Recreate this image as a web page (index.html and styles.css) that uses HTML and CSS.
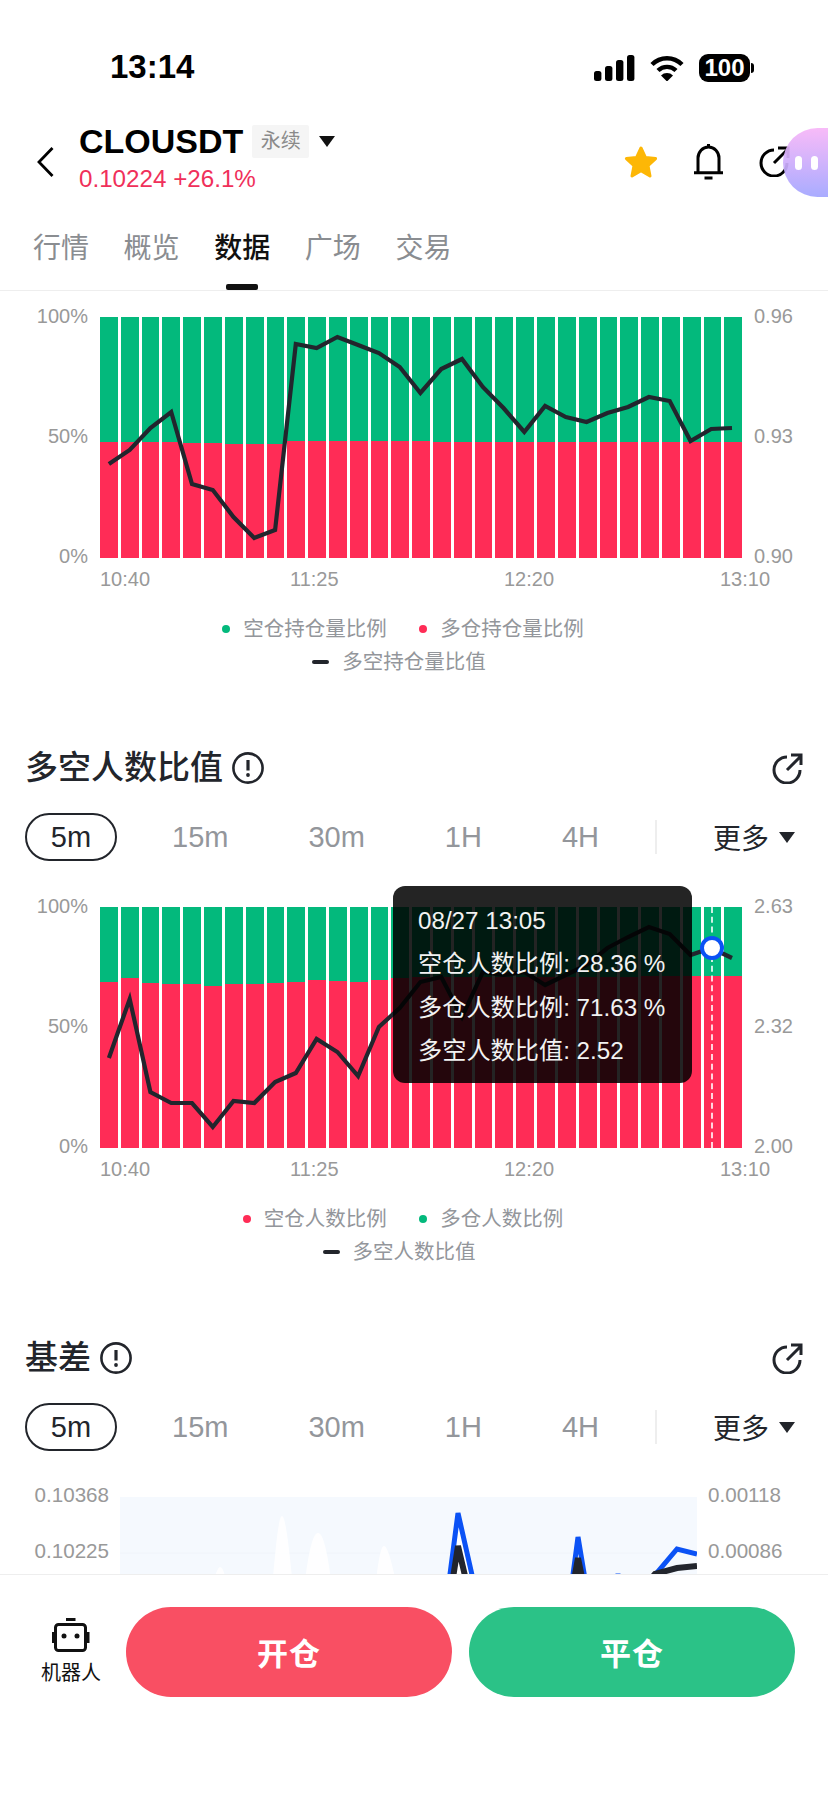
FILE: index.html
```html
<!DOCTYPE html>
<html lang="zh-CN">
<head>
    <meta charset="UTF-8">
    <meta name="viewport" content="width=device-width, initial-scale=1.0">
    <title>CLOUSDT</title>
    <link rel="stylesheet" href="styles.css">
</head>
<body>
<div class="page">
    <div class="status-bar">
        <span class="time">13:14</span>
        <div class="status-icons">
            <svg class="signal" width="41" height="26" viewBox="0 0 41 26">
                <rect x="0" y="16" width="7.4" height="10" rx="2.5"/>
                <rect x="11" y="11" width="7.4" height="15" rx="2.5"/>
                <rect x="22" y="5" width="7.4" height="21" rx="2.5"/>
                <rect x="33" y="0" width="7.4" height="26" rx="2.5"/>
            </svg>
            <svg class="wifi" width="34" height="26" viewBox="0 0 34 26">
                <path d="M2 9.5 A21 21 0 0 1 32 9.5" fill="none" stroke="#000" stroke-width="4.4"/>
                <path d="M8 15.5 A13 13 0 0 1 26 15.5" fill="none" stroke="#000" stroke-width="4.4"/>
                <path d="M11 20.4 A8.5 8.5 0 0 1 23 20.4 L17 26.5 Z"/>
            </svg>
            <span class="battery">100</span>
        </div>
    </div>

    <header class="header">
        <svg class="back" width="17" height="30" viewBox="0 0 17 30">
            <path d="M15.5 1 L2 15 L15.5 29" fill="none" stroke="#000" stroke-width="2.8"/>
        </svg>
        <div class="symbol">
            <div class="symbol-row">
                <span class="symbol-name">CLOUSDT</span>
                <span class="symbol-tag">永续</span>
                <span class="caret"></span>
            </div>
            <div class="symbol-price">0.10224 +26.1%</div>
        </div>
        <div class="header-icons">
            <svg width="36" height="34" viewBox="0 0 36 34">
                <polygon points="18,3 22.4,12.4 32.6,13.6 25,20.6 27,31 18,25.8 9,31 11,20.6 3.4,13.6 13.6,12.4" fill="#fdb706" stroke="#fdb706" stroke-width="3" stroke-linejoin="round"/>
            </svg>
            <svg width="30" height="36" viewBox="0 0 30 36">
                <path d="M14.5 0 V3 M4 28 V14 A10.5 11 0 0 1 25 14 V28 M0 28.7 H29 M10.5 34 H18.5" fill="none" stroke="#000" stroke-width="3"/>
            </svg>
            <svg width="31" height="31" viewBox="0 0 31 31">
                <path d="M15 4 A13 13 0 1 0 28 17 M15 17 L29 3 M19 2 H29 V12" fill="none" stroke="#000" stroke-width="3"/>
            </svg>
        </div>
        <div class="bubble"><i></i><i></i></div>
    </header>

    <nav class="tabs">
        <span class="tab">行情</span>
        <span class="tab">概览</span>
        <span class="tab active">数据</span>
        <span class="tab">广场</span>
        <span class="tab">交易</span>
    </nav>

    <main class="content">
        <section class="section">
            <div class="chart">
                <div class="y-axis left"><span>100%</span><span>50%</span><span>0%</span></div>
                <div class="plot" id="plot-position"></div>
                <div class="y-axis"><span>0.96</span><span>0.93</span><span>0.90</span></div>
                <div class="x-axis"><span>10:40</span><span>11:25</span><span>12:20</span><span>13:10</span></div>
            </div>
            <div class="legend">
                <div class="legend-row">
                    <span class="legend-item"><i class="dot green"></i>空仓持仓量比例</span>
                    <span class="legend-item"><i class="dot red"></i>多仓持仓量比例</span>
                </div>
                <div class="legend-row second">
                    <span class="legend-item"><i class="dash"></i>多空持仓量比值</span>
                </div>
            </div>
        </section>

        <section class="section">
            <div class="section-head">
                <h2>多空人数比值</h2>
                <svg class="info" width="32" height="32" viewBox="0 0 32 32">
                    <circle cx="16" cy="16" r="14.6" fill="none" stroke="#22252b" stroke-width="2.6"/>
                    <path d="M16 8 V18.5" stroke="#22252b" stroke-width="3.2"/>
                    <circle cx="16" cy="23" r="1.9" fill="#22252b"/>
                </svg>
                <svg class="share" width="31" height="31" viewBox="0 0 31 31">
                    <path d="M15 4 A13 13 0 1 0 28 17 M15 17 L29 3 M19 2 H29 V12" fill="none" stroke="#22252b" stroke-width="3"/>
                </svg>
            </div>
            <div class="ranges">
                <span class="range active">5m</span>
                <span class="range">15m</span>
                <span class="range">30m</span>
                <span class="range">1H</span>
                <span class="range">4H</span>
                <span class="range-sep"></span>
                <span class="range-more">更多<span class="caret big"></span></span>
            </div>
            <div class="chart">
                <div class="y-axis left"><span>100%</span><span>50%</span><span>0%</span></div>
                <div class="plot" id="plot-people">
                    <div class="cursor"></div>
                    <div class="cursor-dot"></div>
                    <div class="tooltip">
                        <div>08/27 13:05</div>
                        <div>空仓人数比例: 28.36 %</div>
                        <div>多仓人数比例: 71.63 %</div>
                        <div>多空人数比值: 2.52</div>
                    </div>
                </div>
                <div class="y-axis"><span>2.63</span><span>2.32</span><span>2.00</span></div>
                <div class="x-axis"><span>10:40</span><span>11:25</span><span>12:20</span><span>13:10</span></div>
            </div>
            <div class="legend">
                <div class="legend-row">
                    <span class="legend-item"><i class="dot red"></i>空仓人数比例</span>
                    <span class="legend-item"><i class="dot green"></i>多仓人数比例</span>
                </div>
                <div class="legend-row second">
                    <span class="legend-item"><i class="dash"></i>多空人数比值</span>
                </div>
            </div>
        </section>

        <section class="section">
            <div class="section-head">
                <h2>基差</h2>
                <svg class="info" width="32" height="32" viewBox="0 0 32 32">
                    <circle cx="16" cy="16" r="14.6" fill="none" stroke="#22252b" stroke-width="2.6"/>
                    <path d="M16 8 V18.5" stroke="#22252b" stroke-width="3.2"/>
                    <circle cx="16" cy="23" r="1.9" fill="#22252b"/>
                </svg>
                <svg class="share" width="31" height="31" viewBox="0 0 31 31">
                    <path d="M15 4 A13 13 0 1 0 28 17 M15 17 L29 3 M19 2 H29 V12" fill="none" stroke="#22252b" stroke-width="3"/>
                </svg>
            </div>
            <div class="ranges">
                <span class="range active">5m</span>
                <span class="range">15m</span>
                <span class="range">30m</span>
                <span class="range">1H</span>
                <span class="range">4H</span>
                <span class="range-sep"></span>
                <span class="range-more">更多<span class="caret big"></span></span>
            </div>
            <div class="chart basis">
                <div class="y-axis left"><span>0.10368</span><span>0.10225</span></div>
                <svg class="basis-plot" width="577" height="120" viewBox="0 0 577 120">
                    <rect width="577" height="120" fill="#f5f9fe"/>
                    <path d="M0 56 H577" stroke="#f0f4fa" stroke-width="1"/>
                    <g fill="#fff" fill-opacity="0.85">
                        <path d="M91 90 C95 78 98 70 100 70 C103 70 105 78 108 90 Z"/>
                        <path d="M152 90 C155 60 158 19 162 19 C166 19 170 60 173 90 Z"/>
                        <path d="M184 90 C188 60 192 36 198 36 C204 36 208 60 212 90 Z"/>
                        <path d="M255 90 C258 70 260 49 264 49 C268 49 273 70 277 90 Z"/>
                    </g>
                    <path d="M327 100 L338 16 L357 100 Z M450 100 L458 40 L468 100 Z" fill="#fff"/>
                    <path d="M327 100 L338 16 L357 100 M450 100 L458 40 L468 100 M494 100 L498 77 L503 100 M520 100 L535 78 L557 52 L577 57" fill="none" stroke="#0b52f5" stroke-width="5"/>
                    <path d="M330 100 L338 49 L350 100 M451 100 L458 61 L466 100 M515 100 L535 77 L557 71 L577 69" fill="none" stroke="#22252d" stroke-width="6"/>
                </svg>
                <div class="y-axis"><span>0.00118</span><span>0.00086</span></div>
            </div>
        </section>
    </main>

    <footer class="bottom-bar">
        <div class="robot">
            <svg width="38" height="34" viewBox="0 0 38 34">
                <rect x="14" y="0" width="9.5" height="3" fill="#111"/>
                <rect x="3.5" y="6.5" width="30" height="26" rx="3" fill="none" stroke="#111" stroke-width="3"/>
                <rect x="0" y="14" width="2.5" height="11" fill="#111"/>
                <rect x="35" y="14" width="2.5" height="11" fill="#111"/>
                <circle cx="12" cy="18" r="2.5" fill="#111"/>
                <circle cx="25" cy="18" r="2.5" fill="#111"/>
            </svg>
            <span>机器人</span>
        </div>
        <button class="trade open">开仓</button>
        <button class="trade close">平仓</button>
    </footer>
</div>
<script src="chart.js"></script>
</body>
</html>
```

FILE: styles.css
```css
*{
    margin: 0;
    padding: 0;
    box-sizing: border-box;
}
body{
    width: 828px;
    height: 1801px;
    overflow: hidden;
    background-color: white;
    font-family: "Liberation Sans", "Noto Sans CJK SC", sans-serif;
    color: #22252b;
}
.page{
    position: relative;
    height: 1801px;
    display: flex;
    flex-direction: column;
}

/* status bar */
.status-bar{
    height: 121px;
    flex: none;
    display: flex;
    align-items: flex-start;
    padding: 47px 78px 0 110px;
}
.time{
    font-size: 33px;
    line-height: 40px;
    font-weight: bold;
    color: black;
}
.status-icons{
    margin-left: auto;
    margin-top: 7px;
    display: flex;
    align-items: center;
    gap: 15px;
}
.battery{
    position: relative;
    width: 51px;
    height: 28px;
    border-radius: 9px;
    background-color: black;
    color: white;
    font-size: 24px;
    line-height: 28px;
    font-weight: bold;
    text-align: center;
}
.battery::after{
    content: "";
    position: absolute;
    left: 52px;
    top: 9px;
    width: 3px;
    height: 10px;
    border-radius: 0 3px 3px 0;
    background-color: black;
}

/* header */
.header{
    height: 75px;
    flex: none;
    display: flex;
    align-items: center;
    padding: 0 38px 0 37px;
}
.back{
    flex: none;
    margin-top: 6px;
}
.symbol{
    margin-left: 25px;
}
.symbol-row{
    height: 40px;
    display: flex;
    align-items: center;
}
.symbol-name{
    font-size: 34px;
    font-weight: bold;
    color: black;
}
.symbol-tag{
    margin-left: 9px;
    width: 57px;
    height: 33px;
    line-height: 33px;
    text-align: center;
    font-size: 20px;
    color: #8a8a8a;
    background-color: #f5f5f5;
    border-radius: 2px;
}
.caret{
    flex: none;
    width: 0;
    height: 0;
    margin-left: 10px;
    border-left: 8px solid transparent;
    border-right: 8px solid transparent;
    border-top: 11px solid #111;
}
.symbol-price{
    height: 35px;
    line-height: 35px;
    font-size: 24.2px;
    color: #f0305a;
}
.header-icons{
    margin-left: auto;
    margin-top: 6px;
    display: flex;
    align-items: center;
    gap: 35px;
}
.bubble{
    position: absolute;
    right: 0;
    top: 128px;
    width: 45px;
    height: 69px;
    padding-left: 12px;
    display: flex;
    align-items: center;
    gap: 9px;
    border-radius: 35px 0 0 35px;
    background: linear-gradient(#f8b6f8, #a3a6ff);
    opacity: 0.93;
}
.bubble i{
    width: 7px;
    height: 14px;
    border-radius: 4px;
    background-color: white;
}

/* tabs */
.tabs{
    height: 95px;
    flex: none;
    display: flex;
    gap: 34.6px;
    padding: 33px 0 0 33px;
    border-bottom: 1px solid #eeeeee;
}
.tab{
    position: relative;
    height: 40px;
    line-height: 40px;
    font-size: 28px;
    color: #8a8d91;
}
.tab.active{
    color: #111;
    font-weight: 500;
}
.tab.active::after{
    content: "";
    position: absolute;
    left: 12px;
    top: 55px;
    width: 32px;
    height: 6px;
    border-radius: 2px;
    background-color: #111;
}

.content{
    flex: 1;
    min-height: 0;
    overflow: hidden;
    padding-top: 26px;
}
.section + .section{
    margin-top: 74px;
}

/* section title + range selector */
.section-head{
    height: 32px;
    display: flex;
    align-items: center;
    padding: 0 25px;
}
.section-head h2{
    font-size: 33px;
    line-height: 32px;
    font-weight: 500;
}
.info{
    margin-left: 9px;
}
.share{
    margin-left: auto;
}
.ranges{
    height: 48px;
    margin: 29px 0 46px;
    padding: 0 33px 0 25px;
    display: flex;
    align-items: center;
    gap: 80px;
    font-size: 29px;
    color: #93969b;
}
.range{
    flex: none;
}
.range.active{
    width: 92px;
    height: 48px;
    margin-right: -25px;
    line-height: 44px;
    text-align: center;
    color: #22252b;
    border: 2px solid #22252b;
    border-radius: 24px;
}
.range-sep{
    flex: none;
    width: 2px;
    height: 34px;
    margin-left: -24px;
    background-color: #eeeeee;
}
.range-more{
    flex: none;
    margin-left: -24px;
    display: flex;
    align-items: center;
    white-space: nowrap;
    font-size: 28px;
    color: #22252b;
}
.caret.big{
    border-top-color: #22252b;
}

/* charts */
.chart{
    display: grid;
    grid-template-columns: 88px 642px auto;
    column-gap: 12px;
}
.chart.basis{
    grid-template-columns: 109px 577px auto;
    column-gap: 11px;
}
.y-axis{
    display: flex;
    flex-direction: column;
    justify-content: space-between;
    margin: -12px 0 -9px;
    font-size: 20px;
    line-height: 22px;
    color: #999999;
}
.y-axis.left{
    text-align: right;
}
.basis .y-axis{
    justify-content: flex-start;
    gap: 34px;
    margin: -13px 0 0;
    font-size: 20.6px;
}
.plot{
    position: relative;
    height: 241px;
    display: flex;
    gap: 3px;
}
.bar{
    flex: 1;
    display: flex;
    align-items: flex-end;
    background-color: #03b97c;
}
.bar-red{
    width: 100%;
    background-color: #ff2c56;
}
.line{
    position: absolute;
    left: 0;
    top: 0;
    overflow: visible;
}
.x-axis{
    grid-column: 2;
    display: grid;
    grid-template-columns: 190px 214px 216px 22px;
    margin-top: 8px;
    height: 26px;
    line-height: 26px;
    font-size: 20px;
    color: #999999;
}
.cursor{
    position: absolute;
    left: 611px;
    top: 0;
    bottom: 0;
    border-left: 2px dashed rgba(255, 255, 255, 0.8);
    z-index: 2;
}
.cursor-dot{
    position: absolute;
    left: 600px;
    top: 29px;
    width: 24px;
    height: 24px;
    border-radius: 50%;
    background-color: white;
    border: 4px solid #0b52f5;
    z-index: 3;
}
.tooltip{
    position: absolute;
    left: 293px;
    top: -21px;
    width: 299px;
    height: 197px;
    padding: 13px 0 0 25px;
    border-radius: 12px;
    background-color: rgba(0, 0, 0, 0.86);
    color: #f2f2f2;
    font-size: 24.2px;
    line-height: 43.3px;
    white-space: nowrap;
    z-index: 4;
}

/* legend */
.legend{
    margin-top: 20px;
    font-size: 20.5px;
    line-height: 33px;
    color: #93969b;
}
.legend-row{
    display: flex;
    justify-content: center;
    gap: 32.5px;
    padding-right: 22px;
}
.legend-row.second{
    padding-right: 30px;
}
.legend-item{
    display: flex;
    align-items: center;
}
.dot{
    width: 8px;
    height: 8px;
    margin-right: 13px;
    border-radius: 50%;
}
.dot.green{
    background-color: #03b97c;
}
.dot.red{
    background-color: #ff2c56;
}
.dash{
    width: 17px;
    height: 4px;
    margin-right: 13px;
    border-radius: 2px;
    background-color: #22252b;
}

/* bottom bar */
.bottom-bar{
    height: 227px;
    flex: none;
    display: flex;
    align-items: flex-start;
    padding: 32px 33px 0 41px;
    border-top: 1px solid #eeeeee;
    background-color: white;
}
.robot{
    width: 60px;
    margin-top: 11px;
    margin-right: 25px;
    display: flex;
    flex-direction: column;
    align-items: center;
    gap: 6px;
    font-size: 20px;
    line-height: 30px;
    color: #111;
}
.trade{
    width: 326px;
    height: 90px;
    padding-bottom: 2px;
    border: none;
    border-radius: 45px;
    color: white;
    font-family: inherit;
    font-size: 31px;
    font-weight: bold;
    letter-spacing: 1px;
}
.trade.open{
    background-color: #f94f63;
}
.trade.close{
    margin-left: 17px;
    background-color: #2bc287;
}
```

FILE: chart.js
```js
// red share of each bar (percent) and the ratio line (px from the top of the plot)
let charts = {
    "plot-position": {
        red: [48.1, 48.1, 48.1, 48.1, 47.7, 47.6, 47.4, 47.3, 47.3, 48.5, 48.5, 48.5, 48.5, 48.5, 48.5, 48.4,
              48.3, 48.3, 48.3, 48.3, 48.3, 48.3, 48.3, 48.3, 48.3, 48.3, 48.3, 48.3, 48.3, 48.3, 48.3],
        line: [147, 133, 111, 95, 167, 173, 200, 221, 213, 27, 31, 20, 28, 36, 50, 76,
               52, 42, 70, 91, 115, 89, 100, 105, 96, 90, 80, 84, 124, 112, 111]
    },
    "plot-people": {
        red: [68.9, 70.5, 68.5, 68, 68, 67.2, 68, 68, 68.5, 68.9, 69.7, 69.3, 68.9, 69.9, 70.5, 71,
              71, 71, 71, 71, 71, 71, 71, 71, 71, 71, 71.4, 71.4, 71.4, 71.4, 71.4],
        line: [151, 92, 185, 196, 196, 220, 194, 196, 175, 166, 132, 145, 169, 120, 101, 75,
               70, 110, 65, 68, 65, 78, 68, 58, 41, 30, 20, 27, 48, 41, 51]
    }
};

for (let id in charts) {
    let plot = document.getElementById(id);
    let data = charts[id];
    let bars = "";
    for (let i = 0; i < data.red.length; i++) {
        bars += '<div class="bar"><div class="bar-red" style="height:' + data.red[i] + '%"></div></div>';
    }
    let points = data.line.map(function (y, i) {
        return (8.9 + i * 20.77).toFixed(1) + "," + y;
    }).join(" ");
    let line = '<svg class="line" width="642" height="241">' +
        '<polyline points="' + points + '" fill="none" stroke="#22252d" stroke-width="4.2" stroke-linejoin="miter"/></svg>';
    plot.insertAdjacentHTML("afterbegin", bars + line);
}
```
